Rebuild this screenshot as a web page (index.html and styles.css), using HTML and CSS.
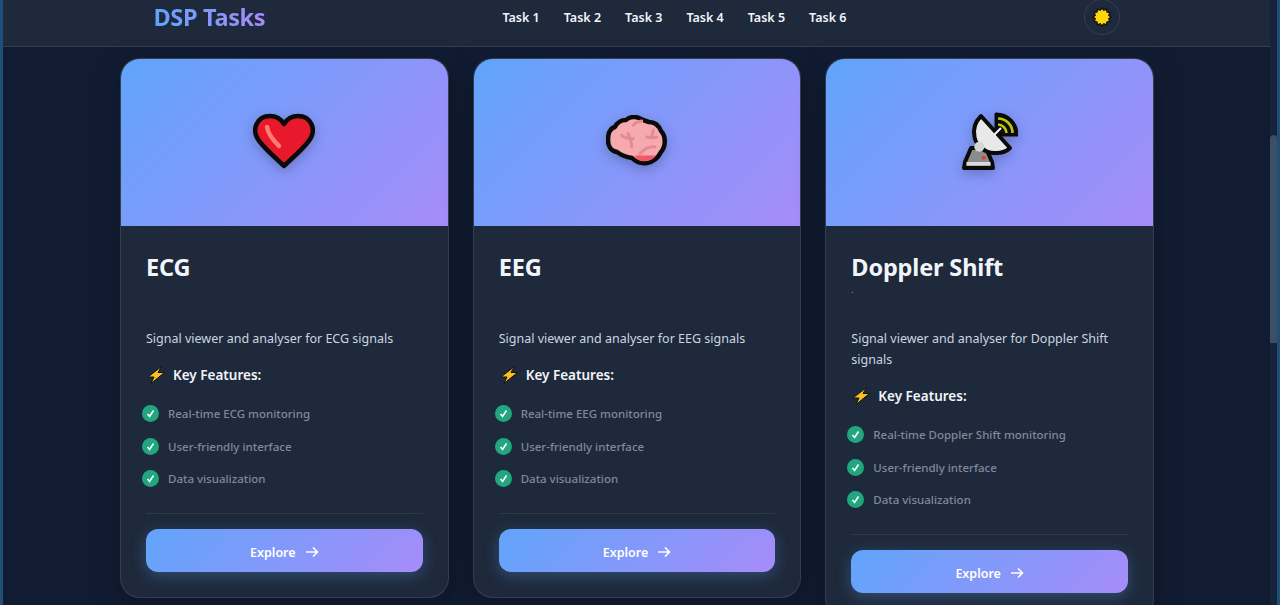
FILE: index.html
```html
<!DOCTYPE html>
<html lang="en">

<head>
    <meta charset="UTF-8">
    <meta name="viewport" content="width=device-width, initial-scale=1.0">
    <title>DSP Tasks</title>
    <link rel="stylesheet" href="styles.css">
</head>

<body>
    <div class="frame">
        <div class="page">
            <header class="topbar">
                <div class="topbar-inner">
                    <a class="logo" href="#">DSP Tasks</a>
                    <nav class="nav">
                        <a href="#">Task 1</a>
                        <a href="#">Task 2</a>
                        <a href="#">Task 3</a>
                        <a href="#">Task 4</a>
                        <a href="#">Task 5</a>
                        <a href="#">Task 6</a>
                    </nav>
                    <button class="theme-btn" type="button" aria-label="Toggle theme">
                        <svg width="20" height="20" viewBox="0 0 20 20">
                            <polygon fill="#ffd60a" stroke="#111" stroke-width="1.3" points="19,10 16.76,11.81 17.79,14.5 14.95,14.95 14.5,17.79 11.81,16.76 10,19 8.19,16.76 5.5,17.79 5.05,14.95 2.21,14.5 3.24,11.81 1,10 3.24,8.19 2.21,5.5 5.05,5.05 5.5,2.21 8.19,3.24 10,1 11.81,3.24 14.5,2.21 14.95,5.05 17.79,5.5 16.76,8.19" />
                        </svg>
                    </button>
                </div>
            </header>

            <main class="cards">
                <!-- ECG -->
                <article class="card">
                    <div class="card-image">
                        <svg class="emoji" width="62" height="56" viewBox="0 0 62 56">
                            <path fill="#e8192c" stroke="#0a0a0a" stroke-width="4.5" stroke-linejoin="round" d="M31 53 C24 46 14 38 7 29 C-3 17 4 3 17 3 C23 3 28 6 31 11 C34 6 39 3 45 3 C58 3 65 17 55 29 C48 38 38 46 31 53 Z" />
                            <path fill="none" stroke="#ff7d6e" stroke-width="4.5" stroke-linecap="round" d="M14 14 C15 21 20 27 26 33" />
                        </svg>
                    </div>
                    <div class="card-body">
                        <h2 class="card-title">ECG</h2>
                        <div class="title-note"></div>
                        <p class="card-desc">Signal viewer and analyser for ECG signals</p>
                        <h3 class="features-head">
                            <svg width="18" height="18" viewBox="0 0 18 18">
                                <polygon fill="#fbbf24" stroke="#111" stroke-width="1" stroke-linejoin="round" points="14.5,0.5 1,11 7,11 4,17.5 17.5,6.5 11,6.5" />
                            </svg>
                            Key Features:
                        </h3>
                        <ul class="features">
                            <li><span class="tick"><svg width="11" height="11" viewBox="0 0 11 11"><path fill="none" stroke="#fff" stroke-width="1.6" d="M2.5 6 L4.6 8.5 L8.5 2.5" /></svg></span>Real-time ECG monitoring</li>
                            <li><span class="tick"><svg width="11" height="11" viewBox="0 0 11 11"><path fill="none" stroke="#fff" stroke-width="1.6" d="M2.5 6 L4.6 8.5 L8.5 2.5" /></svg></span>User-friendly interface</li>
                            <li><span class="tick"><svg width="11" height="11" viewBox="0 0 11 11"><path fill="none" stroke="#fff" stroke-width="1.6" d="M2.5 6 L4.6 8.5 L8.5 2.5" /></svg></span>Data visualization</li>
                        </ul>
                        <a class="explore" href="#">Explore
                            <svg width="14" height="12" viewBox="0 0 14 12"><path fill="none" stroke="#fff" stroke-width="1.6" d="M1 6 H12.5 M8 1.5 L12.5 6 L8 10.5" /></svg>
                        </a>
                    </div>
                </article>

                <!-- EEG -->
                <article class="card">
                    <div class="card-image">
                        <svg class="emoji" width="62" height="52" viewBox="0 0 62 52">
                            <path fill="#f6a9ae" stroke="#0a0a0a" stroke-width="4.5" stroke-linejoin="round" d="M2 25 C2 17 5 13 9 12 C11 7 16 5 20 5 C23 2 29 1 33 3 C37 5 39 6 43 7 C49 7 53 11 55 16 C60 21 60 31 55 37 C52 43 47 47 41 48 C34 49 30 47 26 43 C20 42 15 40 11 37 C5 36 2 31 2 25 Z" />
                            <path fill="#ef5a6a" d="M28.5 40.5 L50 40.5 C48 43.5 45 45.5 41 46 C35 47 31 45 28.5 40.5 Z" />
                            <path fill="none" stroke="#e58a92" stroke-width="3" stroke-linecap="round" stroke-linejoin="round" d="M27.3 10.3 C29 8 32 6.5 35.7 6 M15.7 20.3 C19 23 23 24 27.3 23.7 M22.3 18.7 C24 22 25.5 26 25.7 32 M40.7 22 C44 23 47 23 50.7 22 M47.3 15.3 C47 18 46 20 45 22 M34 38.7 C38 34 44 31 49 32" />
                        </svg>
                    </div>
                    <div class="card-body">
                        <h2 class="card-title">EEG</h2>
                        <div class="title-note"></div>
                        <p class="card-desc">Signal viewer and analyser for EEG signals</p>
                        <h3 class="features-head">
                            <svg width="18" height="18" viewBox="0 0 18 18">
                                <polygon fill="#fbbf24" stroke="#111" stroke-width="1" stroke-linejoin="round" points="14.5,0.5 1,11 7,11 4,17.5 17.5,6.5 11,6.5" />
                            </svg>
                            Key Features:
                        </h3>
                        <ul class="features">
                            <li><span class="tick"><svg width="11" height="11" viewBox="0 0 11 11"><path fill="none" stroke="#fff" stroke-width="1.6" d="M2.5 6 L4.6 8.5 L8.5 2.5" /></svg></span>Real-time EEG monitoring</li>
                            <li><span class="tick"><svg width="11" height="11" viewBox="0 0 11 11"><path fill="none" stroke="#fff" stroke-width="1.6" d="M2.5 6 L4.6 8.5 L8.5 2.5" /></svg></span>User-friendly interface</li>
                            <li><span class="tick"><svg width="11" height="11" viewBox="0 0 11 11"><path fill="none" stroke="#fff" stroke-width="1.6" d="M2.5 6 L4.6 8.5 L8.5 2.5" /></svg></span>Data visualization</li>
                        </ul>
                        <a class="explore" href="#">Explore
                            <svg width="14" height="12" viewBox="0 0 14 12"><path fill="none" stroke="#fff" stroke-width="1.6" d="M1 6 H12.5 M8 1.5 L12.5 6 L8 10.5" /></svg>
                        </a>
                    </div>
                </article>

                <!-- Doppler -->
                <article class="card">
                    <div class="card-image">
                        <svg class="emoji" width="56" height="58" viewBox="0 0 56 58">
                            <path fill="#0a0a0a" stroke="#0a0a0a" stroke-width="3" stroke-linejoin="round" d="M34 2 C46 2 55 11 55 23 L37 23 L34 20 Z" />
                            <path fill="none" stroke="#b9c900" stroke-width="2.6" d="M36 6.5 C44 6.5 50.5 13 50.5 21 M36 12.5 C40.5 12.5 44.5 16.5 44.5 21" />
                            <path fill="#8b8b8b" stroke="#0a0a0a" stroke-width="4" stroke-linejoin="round" d="M9 36 L24 36 L30 50 L31 56 L2 56 L3 50 Z" />
                            <rect x="4.5" y="50" width="24" height="3.5" fill="#d9d9d9" />
                            <path fill="#e8e8e8" stroke="#0a0a0a" stroke-width="4" stroke-linejoin="round" d="M19 4 C13 10 11 18 12.5 25 C14 33 23 42 34 41 C40 41 45 39 48 36 Z" />
                            <path fill="none" stroke="#f4f4f4" stroke-width="2.2" d="M32 23 L39 16" />
                            <circle cx="17.3" cy="34.7" r="5" fill="#d6d6d6" />
                            <circle cx="21.7" cy="45.7" r="2" fill="#e23b3b" />
                        </svg>
                    </div>
                    <div class="card-body">
                        <h2 class="card-title">Doppler Shift</h2>
                        <div class="title-note">.</div>
                        <p class="card-desc">Signal viewer and analyser for Doppler Shift signals</p>
                        <h3 class="features-head">
                            <svg width="18" height="18" viewBox="0 0 18 18">
                                <polygon fill="#fbbf24" stroke="#111" stroke-width="1" stroke-linejoin="round" points="14.5,0.5 1,11 7,11 4,17.5 17.5,6.5 11,6.5" />
                            </svg>
                            Key Features:
                        </h3>
                        <ul class="features">
                            <li><span class="tick"><svg width="11" height="11" viewBox="0 0 11 11"><path fill="none" stroke="#fff" stroke-width="1.6" d="M2.5 6 L4.6 8.5 L8.5 2.5" /></svg></span>Real-time Doppler Shift monitoring</li>
                            <li><span class="tick"><svg width="11" height="11" viewBox="0 0 11 11"><path fill="none" stroke="#fff" stroke-width="1.6" d="M2.5 6 L4.6 8.5 L8.5 2.5" /></svg></span>User-friendly interface</li>
                            <li><span class="tick"><svg width="11" height="11" viewBox="0 0 11 11"><path fill="none" stroke="#fff" stroke-width="1.6" d="M2.5 6 L4.6 8.5 L8.5 2.5" /></svg></span>Data visualization</li>
                        </ul>
                        <a class="explore" href="#">Explore
                            <svg width="14" height="12" viewBox="0 0 14 12"><path fill="none" stroke="#fff" stroke-width="1.6" d="M1 6 H12.5 M8 1.5 L12.5 6 L8 10.5" /></svg>
                        </a>
                    </div>
                </article>
            </main>
        </div>

        <!-- scrollbar -->
        <div class="scroll-track">
            <div class="scroll-thumb"></div>
        </div>
    </div>
</body>

</html>
```

FILE: styles.css
```css
* {
    box-sizing: border-box;
}

html,
body {
    margin: 0;
    padding: 0;
    height: 100%;
    overflow: hidden;
}

body {
    background: #111c33;
    font-family: "Noto Sans", "Open Sans", sans-serif;
    color: #f1f5f9;
}

a {
    text-decoration: none;
    color: inherit;
}

.frame {
    display: flex;
    height: 605px;
    border-left: 3px solid #1f4e79;
    border-right: 3px solid #1f4e79;
    overflow: hidden;
}

.page {
    flex: 1;
    min-width: 0;
}

.scroll-track {
    width: 7px;
    padding-top: 135px;
    background: #17233a;
}

.scroll-thumb {
    height: 208px;
    border-radius: 4px 4px 0 0;
    background: #3c4f63;
}

/* top bar */
.topbar {
    height: 47px;
    background: #1e293b;
    border-bottom: 1px solid rgba(255, 255, 255, .1);
}

.topbar-inner {
    display: flex;
    align-items: center;
    justify-content: space-between;
    width: 966px;
    height: 34px;
    margin: 0 auto;
}

.logo {
    font-size: 23.5px;
    font-weight: 700;
    letter-spacing: -.33px;
    background: linear-gradient(90deg, #60a5fa, #a78bfa);
    -webkit-background-clip: text;
    background-clip: text;
    color: transparent;
}

.nav {
    display: flex;
    gap: 24px;
    font-size: 12.5px;
    font-weight: 600;
    color: #f1f5f9;
}

.theme-btn {
    display: flex;
    align-items: center;
    justify-content: center;
    flex: none;
    width: 36px;
    height: 36px;
    padding: 0;
    border: 1px solid rgba(255, 255, 255, .1);
    border-radius: 50%;
    background: transparent;
}

/* cards */
.cards {
    display: grid;
    grid-template-columns: repeat(3, 1fr);
    align-items: start;
    gap: 24px;
    width: 1034px;
    margin: 11px 0 0 117px;
}

.card {
    border: 1px solid rgba(255, 255, 255, .1);
    border-radius: 20px;
    background: #1e293b;
    box-shadow: 0 8px 30px rgba(0, 0, 0, .25);
    overflow: hidden;
}

.card-image {
    display: flex;
    align-items: center;
    justify-content: center;
    height: 167px;
    padding-bottom: 4px;
    background: linear-gradient(135deg, #60a5fa, #a78bfa);
}

.emoji {
    filter: drop-shadow(0 4px 6px rgba(0, 0, 0, .22));
}

.card-body {
    padding: 25px 25px 25px;
}

.card-title {
    margin: 0;
    font-size: 23.5px;
    font-weight: 700;
    line-height: 32px;
    letter-spacing: -.15px;
    color: #f1f5f9;
}

.title-note {
    height: 44.5px;
    font-size: 8px;
    line-height: 13px;
    color: #94a3b8;
}

.card-desc {
    margin: 0 0 15.5px;
    font-size: 12.5px;
    line-height: 21px;
    color: #cbd5e1;
}

.features-head {
    display: flex;
    align-items: center;
    gap: 8px;
    height: 22px;
    margin: 0 0 11.5px 1px;
    font-size: 13.5px;
    font-weight: 600;
    color: #f1f5f9;
}

.features {
    margin: 0 0 15px;
    padding: 0 0 18px;
    list-style: none;
    border-bottom: 1px solid rgba(255, 255, 255, .07);
}

.features li {
    display: flex;
    align-items: center;
    gap: 9px;
    height: 32.5px;
    margin-left: -4px;
    font-size: 11.5px;
    font-weight: 500;
    color: #7f8a9b;
}

.tick {
    display: flex;
    align-items: center;
    justify-content: center;
    flex: none;
    width: 17px;
    height: 17px;
    border-radius: 50%;
    background: #22a67f;
}

.explore {
    display: flex;
    align-items: center;
    justify-content: center;
    gap: 9px;
    height: 43px;
    padding-top: 3px;
    border-radius: 12px;
    background: linear-gradient(135deg, #60a5fa, #a78bfa);
    box-shadow: 0 4px 15px rgba(96, 165, 250, .3);
    font-size: 12.5px;
    font-weight: 600;
    color: #fff;
}
```
